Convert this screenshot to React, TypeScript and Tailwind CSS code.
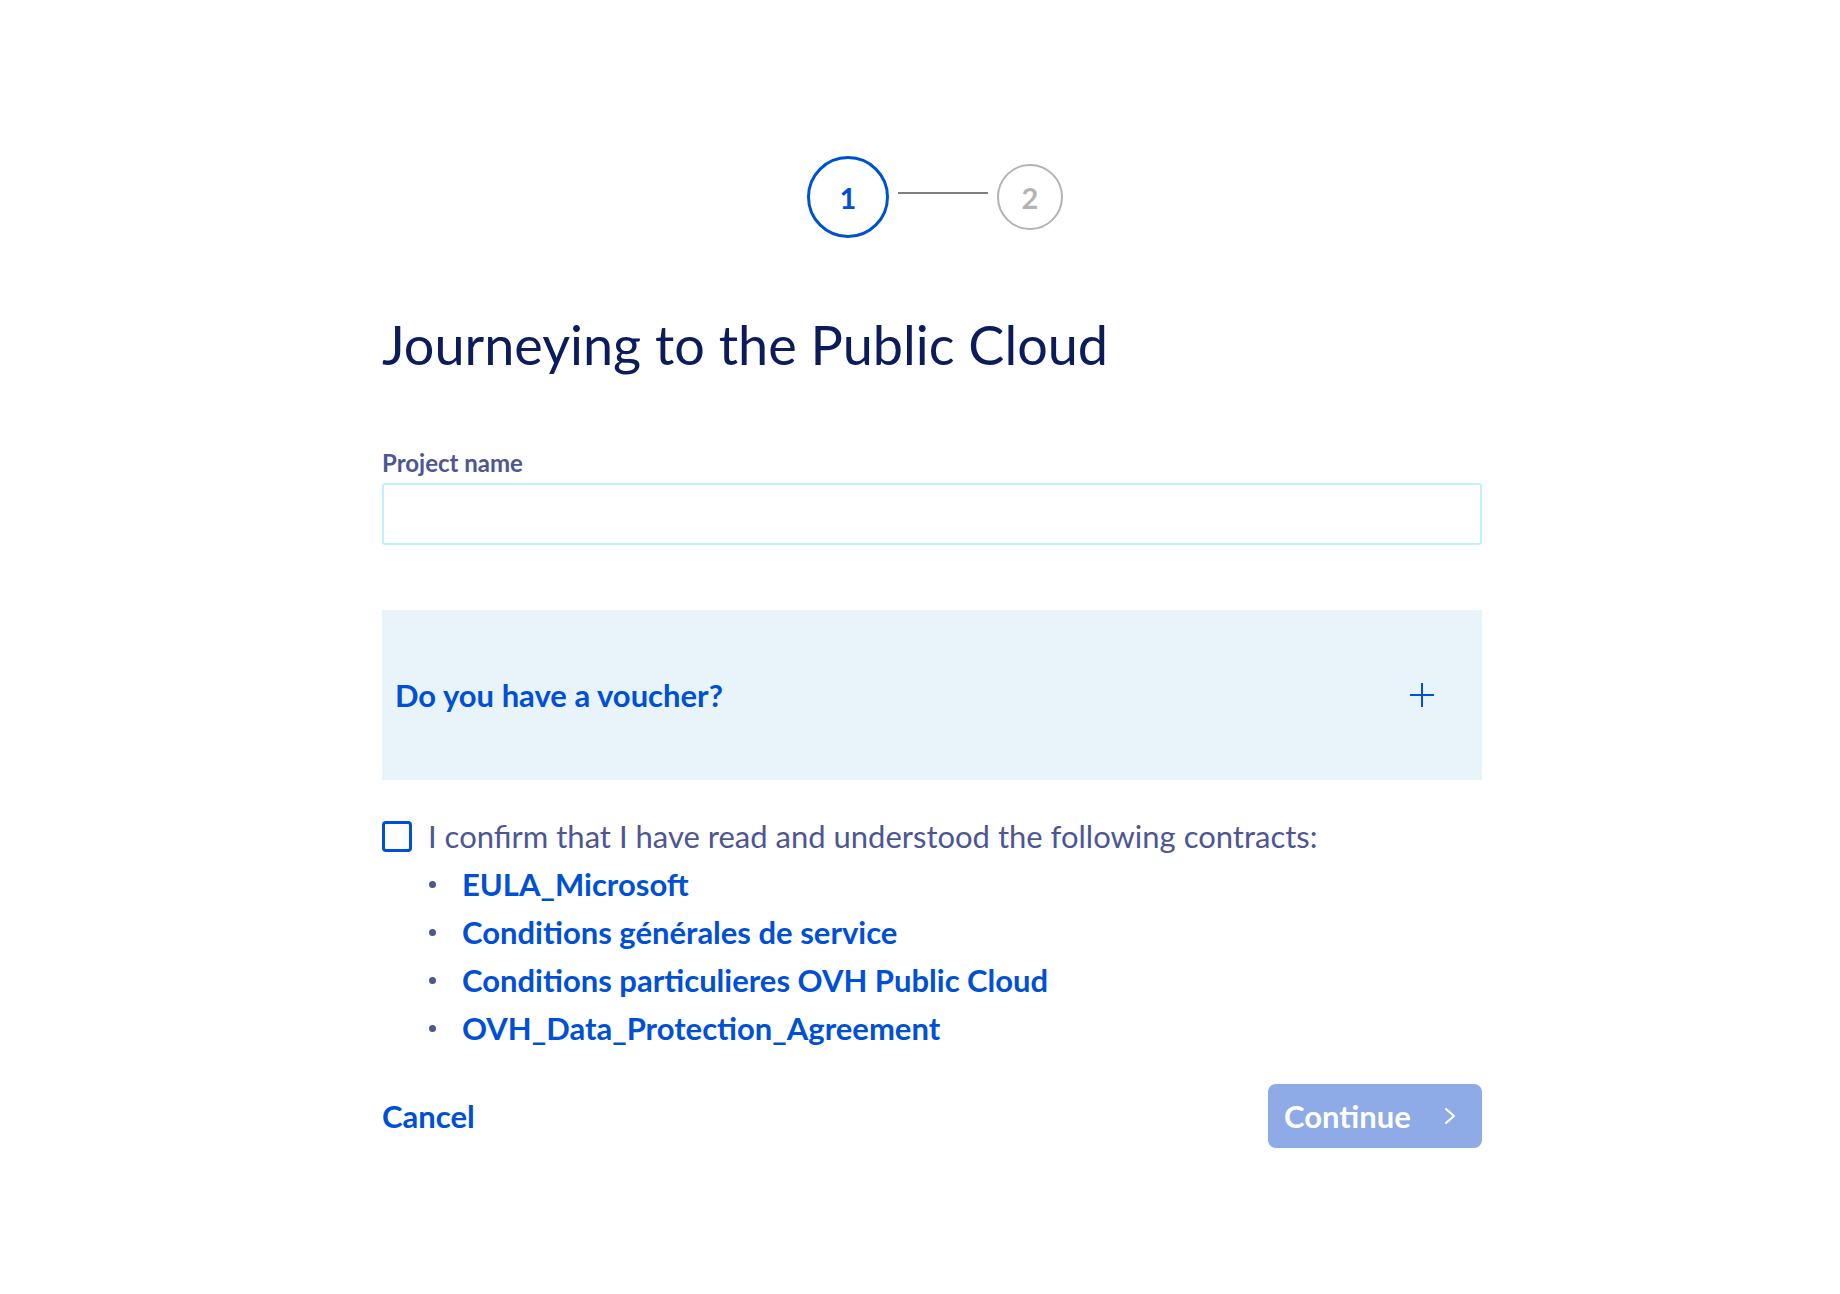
import React from 'react';

const contracts = [
  'EULA_Microsoft',
  'Conditions générales de service',
  'Conditions particulieres OVH Public Cloud',
  'OVH_Data_Protection_Agreement',
];

const Stepper: React.FC = () => (
  <div className="flex items-center justify-center pl-[6px]">
    <div className="flex h-[82px] w-[82px] items-center justify-center rounded-full border-[3px] border-[#0050d7] text-[29px] font-bold leading-none text-[#0050d7]">
      1
    </div>
    <div className="mx-[9px] mb-[8px] h-[2px] w-[90px] bg-[#7f7f7f]" />
    <div className="flex h-[66px] w-[66px] items-center justify-center rounded-full border-2 border-[#b3b3b3] text-[29px] font-bold leading-none text-[#b3b3b3]">
      2
    </div>
  </div>
);

const PlusIcon = () => (
  <svg width="24" height="24" viewBox="0 0 24 24" fill="none" stroke="#0050d7" strokeWidth="2">
    <path d="M12 0v24M0 12h24" />
  </svg>
);

const ChevronIcon = () => (
  <svg width="12" height="18" viewBox="0 0 12 18" fill="none" stroke="#ffffff" strokeWidth="2.2" strokeLinecap="round" strokeLinejoin="round">
    <path d="M2 2l8 7-8 7" />
  </svg>
);

export default function App() {
  return (
    <div className="min-h-screen bg-white font-['Lato',sans-serif]">
      <div className="flex justify-center pl-[24px] pt-[156px]">
        <div className="w-[1100px]">
          <Stepper />

          <h1 className="mt-[77px] text-[54px] font-normal leading-[60px] text-[#0b1b5c]">
            Journeying to the Public Cloud
          </h1>

          <form className="mt-[74px]">
            <label htmlFor="projectName" className="block text-[24px] font-bold leading-[28px] text-[#4d5693]">
              Project name
            </label>
            <input
              id="projectName"
              type="text"
              className="mt-[6px] block h-[62px] w-full rounded-[3px] border-2 border-[#bef1ff] bg-white px-4 text-[30px] text-[#4d5693] outline-none"
            />

            <div className="mt-[65px] flex h-[170px] items-center justify-between bg-[#e9f4fa] pl-[13px] pr-[48px]">
              <span className="text-[31px] font-bold leading-[40px] text-[#0050d7]">Do you have a voucher?</span>
              <PlusIcon />
            </div>

            <div className="mt-[36px] flex items-center">
              <span className="h-[31px] w-[30px] shrink-0 rounded-[4px] border-[3px] border-[#0050d7] bg-white" />
              <span className="ml-[16px] text-[31px] leading-[40px] text-[#4d5693]">
                I confirm that I have read and understood the following contracts:
              </span>
            </div>

            <ul className="mt-[4px]">
              {contracts.map(c => (
                <li key={c} className="flex h-[48px] items-center">
                  <span className="ml-[47px] h-[7px] w-[7px] rounded-full bg-[#4d5693]" />
                  <a href="#" className="ml-[26px] text-[31px] font-bold leading-[48px] text-[#0050d7]">
                    {c}
                  </a>
                </li>
              ))}
            </ul>

            <div className="mt-[32px] flex items-center justify-between">
              <a href="#" className="text-[31px] font-bold leading-[40px] text-[#0050d7]">
                Cancel
              </a>
              <button
                type="button"
                disabled
                className="flex h-[64px] w-[214px] items-center rounded-[8px] bg-[#8eaae7] pl-[16px] text-[31px] font-bold leading-[40px] text-white"
              >
                <span>Continue</span>
                <span className="ml-[33px]">
                  <ChevronIcon />
                </span>
              </button>
            </div>
          </form>
        </div>
      </div>
    </div>
  );
}
